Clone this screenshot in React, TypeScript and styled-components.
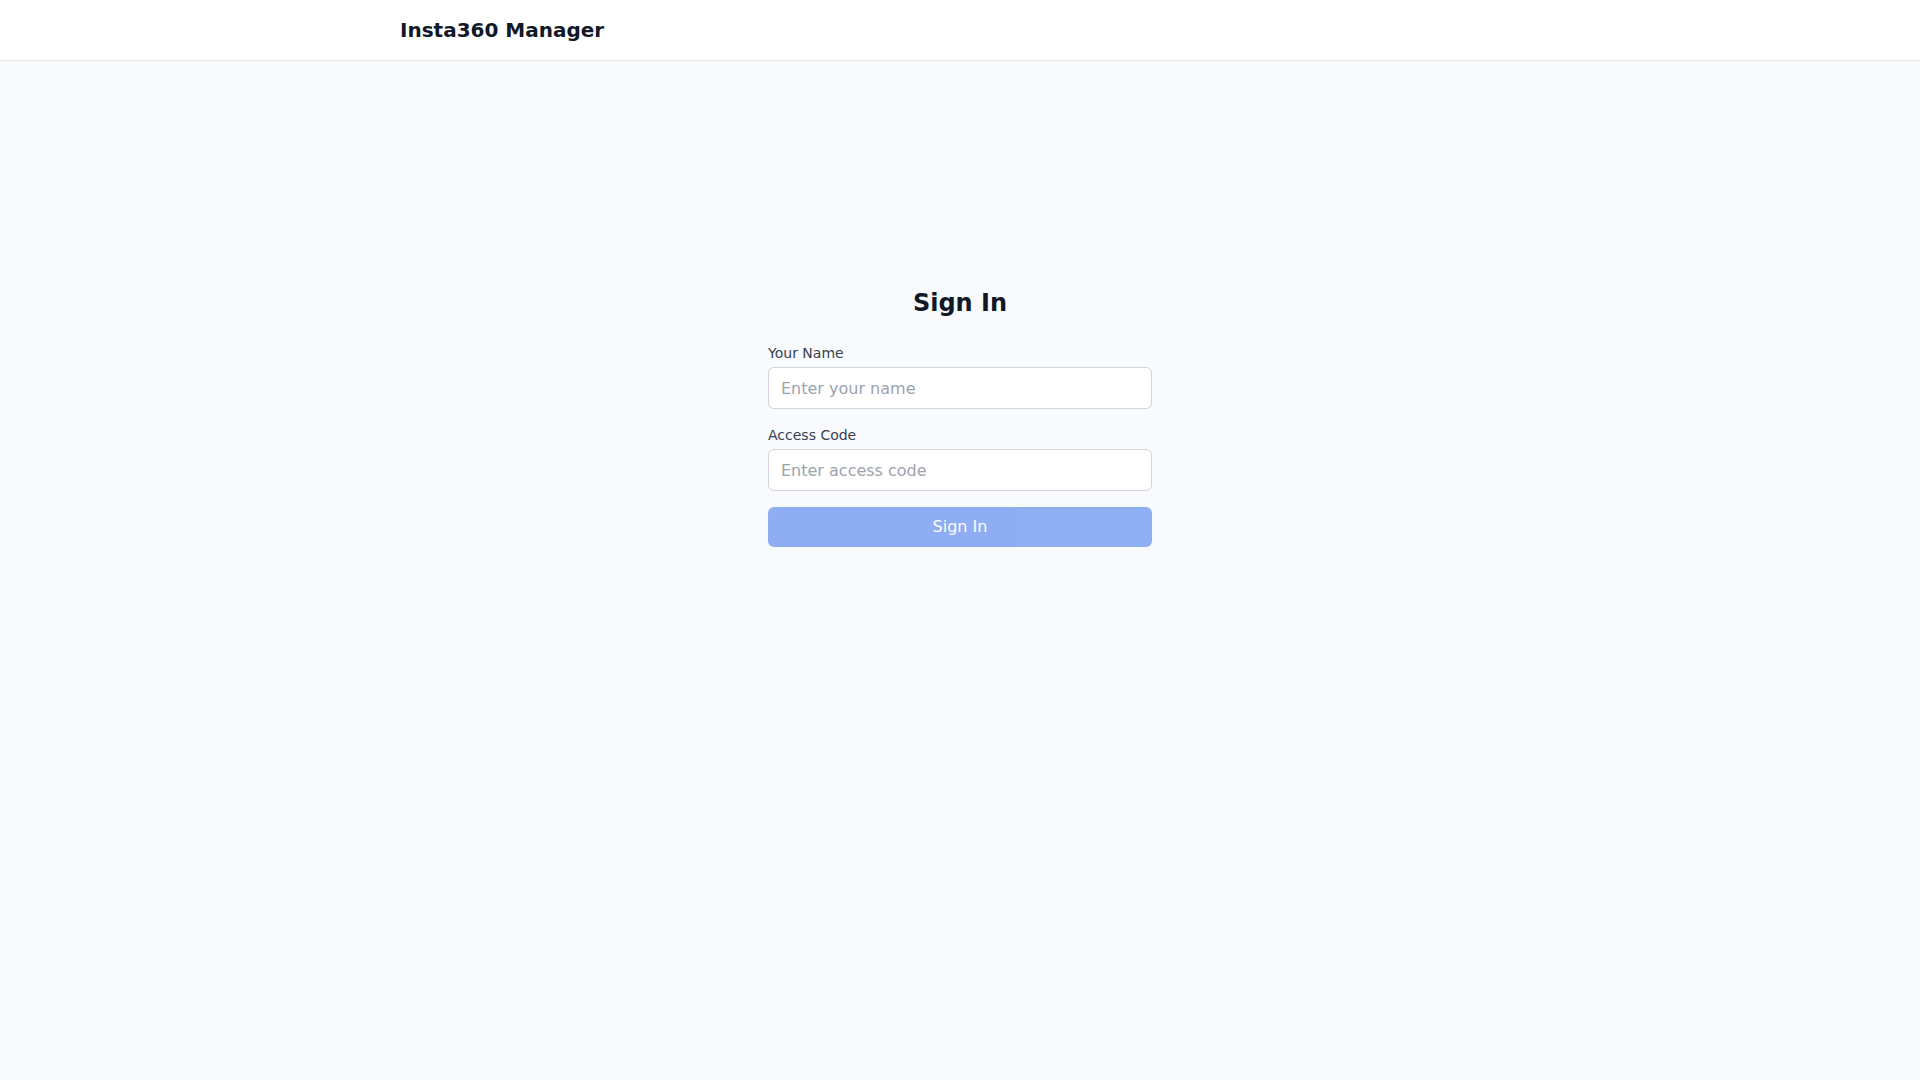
import React from "react";
import styled, { createGlobalStyle } from "styled-components";

const Global = createGlobalStyle`
  * { box-sizing: border-box; }
  html, body { margin: 0; padding: 0; }
  body {
    background: #f9fafb;
    font-family: "DejaVu Sans", sans-serif;
    color: #111827;
    min-height: 100vh;
  }
`;

const Header = styled.header`
  background: #ffffff;
  border-bottom: 1px solid #e5e7eb;
`;

const HeaderInner = styled.div`
  max-width: 1152px;
  margin: 0 auto;
  padding: 16px;
  display: flex;
  align-items: center;
`;

const Brand = styled.h1`
  margin: 0;
  font-size: 20px;
  line-height: 28px;
  font-weight: 700;
  color: #111827;
`;

const Main = styled.main`
  padding-top: 226px;
  display: flex;
  justify-content: center;
`;

const Form = styled.form`
  width: 384px;
  display: flex;
  flex-direction: column;
`;

const Title = styled.h2`
  margin: 0 0 24px;
  font-size: 24px;
  line-height: 32px;
  font-weight: 700;
  text-align: center;
  color: #111827;
`;

const Fields = styled.div`
  display: flex;
  flex-direction: column;
  gap: 16px;
`;

const Field = styled.div`
  display: flex;
  flex-direction: column;
`;

const Label = styled.label`
  display: block;
  font-size: 14px;
  line-height: 20px;
  color: #374151;
  margin-bottom: 4px;
`;

const Input = styled.input`
  width: 100%;
  height: 42px;
  padding: 8px 12px;
  font-family: inherit;
  font-size: 16px;
  line-height: 24px;
  color: #111827;
  background: #ffffff;
  border: 1px solid #d1d5db;
  border-radius: 6px;
  outline: none;
  &::placeholder { color: #9ca3af; }
`;

const Button = styled.button`
  width: 100%;
  height: 40px;
  padding: 8px 16px;
  font-family: inherit;
  font-size: 16px;
  line-height: 24px;
  color: #ffffff;
  background: #2563eb;
  border: none;
  border-radius: 6px;
  opacity: 0.5;
  cursor: not-allowed;
`;

export default function App() {
  return (
    <>
      <Global />
      <Header>
        <HeaderInner>
          <Brand>Insta360 Manager</Brand>
        </HeaderInner>
      </Header>
      <Main>
        <Form onSubmit={(e) => e.preventDefault()}>
          <Title>Sign In</Title>
          <Fields>
            <Field>
              <Label htmlFor="name">Your Name</Label>
              <Input id="name" type="text" placeholder="Enter your name" />
            </Field>
            <Field>
              <Label htmlFor="code">Access Code</Label>
              <Input id="code" type="password" placeholder="Enter access code" />
            </Field>
            <Button type="submit" disabled>
              Sign In
            </Button>
          </Fields>
        </Form>
      </Main>
    </>
  );
}
